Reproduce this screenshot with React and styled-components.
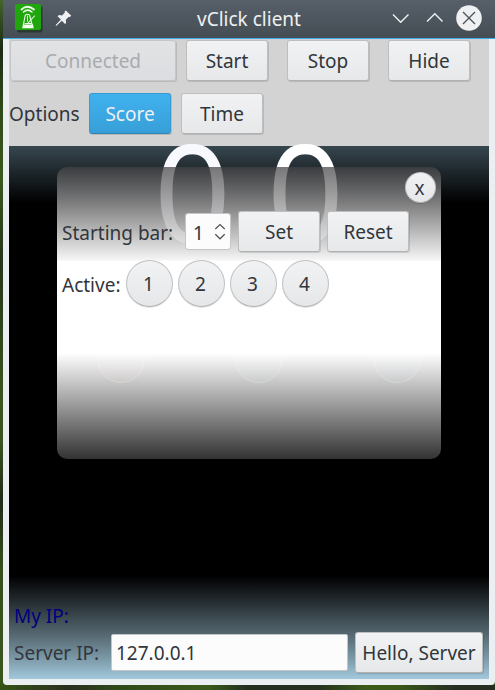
import React from "react";
import styled, { createGlobalStyle } from "styled-components";

const GlobalStyle = createGlobalStyle`
  *, *::before, *::after { box-sizing: border-box; }
  html, body { margin: 0; padding: 0; }
  body { overflow: hidden; }
`;

const Desktop = styled.div`
  width: 495px;
  height: 690px;
  padding-left: 3px;
  overflow: hidden;
  font-family: "Noto Sans", sans-serif;
  font-size: 19px;
  line-height: 26px;
  color: #31363b;
  background:
    linear-gradient(90deg, #375317 0, #2a2f20 14%, #2f4a1a 24%, #3a5a1b 42%, #23301f 50%, #25301f 64%, #3b5c19 74%, #3a5a18 80%, #262e22 92%) 0 685px / 100% 5px no-repeat,
    linear-gradient(#45652b 0, #324c20 20px, #1c2a16 50px, #263a18 75px, #304a18 110px, #3a5a1c 180px, #26351c 260px, #3a571e 400px, #3a5520 440px, #202c1a 500px, #35501c 570px, #3a561d 690px);
`;

const Window = styled.div`
  display: flex;
  flex-direction: column;
  width: 492px;
  height: 685px;
  border-radius: 0 0 4px 4px;
  overflow: hidden;
  background: #eceff2;
`;

const TitleBar = styled.header`
  display: grid;
  grid-template-columns: 164px 1fr 164px;
  align-items: center;
  height: 39px;
  flex: none;
  color: #eff0f1;
  background: linear-gradient(#566068, #454d54);
  border-bottom: 1px solid #3daee9;
`;

const TitleGroup = styled.div`
  display: flex;
  align-items: center;
  height: 38px;
  padding-left: 11px;
  ${(p) => p.$end && "justify-content: flex-end; padding: 0 21px 0 0;"}
`;

const Title = styled.div`
  text-align: center;
  white-space: nowrap;
  padding-bottom: 1px;
`;

const Client = styled.main`
  display: flex;
  flex-direction: column;
  width: 480px;
  height: 640px;
  margin-left: 6px;
`;

const Toolbar = styled.div`
  flex: none;
  height: 107px;
  padding-top: 1px;
  background: #d3d3d3;
`;

const ToolRow = styled.div`
  display: flex;
  align-items: center;
  height: 41px;
  padding-left: ${(p) => p.$inset || 0}px;
  gap: ${(p) => p.$gap}px;
  margin-bottom: 12px;
`;

const OptionLabel = styled.span`
  width: 70px;
  white-space: nowrap;
`;

const Button = styled.button`
  flex: none;
  width: ${(p) => p.$width || 82}px;
  height: 41px;
  padding: 1px 0 0;
  margin-right: ${(p) => p.$after || 0}px;
  font: inherit;
  white-space: nowrap;
  color: #31363b;
  border: 1px solid #bcbec0;
  border-bottom-color: #b0b2b3;
  border-radius: 3px;
  background: linear-gradient(#f1f2f3, #e7e8ea);
  box-shadow: 1px 1px 0 rgba(0, 0, 0, 0.12);
  ${(p) => p.$muted && `
    color: #a9abad;
    background: linear-gradient(#e2e3e5, #dcdde0);
    border-color: #c5c6c7;
  `}
  ${(p) => p.$active && `
    color: #eff0f1;
    background: linear-gradient(#40b1ee, #389fd8);
    border-color: #359bd2;
    border-bottom-color: #2d84b2;
  `}
`;

const Stage = styled.section`
  position: relative;
  display: flex;
  flex-direction: column;
  justify-content: flex-end;
  height: 533px;
  background:
    linear-gradient(#37474f, #000) 0 0 / 100% 57px no-repeat,
    linear-gradient(#000 0, #2c363b 30%, #54666f 56%, #7894a2 78%, #a2c8dc 100%) 0 430px / 100% 103px no-repeat,
    #000;
`;

const Counter = styled.div`
  position: absolute;
  top: -55px;
  left: 0;
  width: 480px;
  text-align: center;
  font-size: 134.5px;
  line-height: 200px;
  word-spacing: 1px;
  white-space: pre;
  color: #fff;
`;

const BarDigit = styled.span`
  color: #f8f8ff;
`;

const BeatLights = styled.div`
  position: absolute;
  top: 189px;
  left: 88px;
  display: flex;
  gap: 90px;
`;

const Light = styled.div`
  width: 48px;
  height: 48px;
  border-radius: 50%;
  border: 1px solid #c9c19a;
  background: ${(p) => p.$tint};
`;

const ScorePanel = styled.div`
  position: absolute;
  top: 21px;
  left: 48px;
  width: 384px;
  height: 292px;
  padding: 44px 0 0 5px;
  border-radius: 10px;
  background: linear-gradient(
    rgba(67, 67, 69, 0.72) 0,
    rgba(248, 248, 248, 0.99) 93px,
    #fff 94px,
    #fff 186px,
    rgba(70, 70, 72, 0.72) 292px
  );
`;

const PanelRow = styled.div`
  display: flex;
  align-items: center;
  height: ${(p) => p.$height}px;
  margin-bottom: 8px;
`;

const FieldLabel = styled.span`
  flex: none;
  width: ${(p) => p.$width}px;
  padding-top: ${(p) => p.$drop || 1}px;
  white-space: nowrap;
`;

const SpinBox = styled.div`
  display: flex;
  align-items: center;
  justify-content: space-between;
  width: 46px;
  height: 37px;
  margin-right: 7px;
  padding: 1px 4px 0 7px;
  border: 1px solid #c4c5c6;
  border-radius: 3px;
  background: #fcfcfc;
`;

const SpinValue = styled.span`
  padding-top: 2px;
`;

const RoundButton = styled.button`
  flex: none;
  width: ${(p) => p.$size}px;
  height: ${(p) => p.$size}px;
  padding: 1px 2px 0 0;
  margin-right: 5px;
  font: inherit;
  color: #31363b;
  border: 1px solid #bfc1c2;
  border-bottom-color: #aeb0b1;
  border-radius: 50%;
  background: linear-gradient(#f1f2f3, #e6e7e9);
  box-shadow: 0 1px 0 rgba(0, 0, 0, 0.1);
`;

const CloseSlot = styled.div`
  position: absolute;
  top: 5px;
  right: 0;
`;

const MyIp = styled.div`
  padding-left: 5px;
  margin-bottom: 3px;
  color: #000080;
`;

const ServerRow = styled.div`
  display: flex;
  align-items: center;
  height: 41px;
  padding-left: 5px;
  margin-bottom: 6px;
`;

const AddressInput = styled.input`
  width: 237px;
  height: 37px;
  margin-right: 7px;
  padding: 0 4px;
  font: inherit;
  color: inherit;
  border: 1px solid #c4c5c6;
  border-radius: 2px;
  outline: 0;
  background: #fcfcfc;
`;

const AppIcon = () => (
  <svg width="30" height="30" viewBox="0 0 30 30">
    <rect x="3" y="2" width="25.5" height="26.5" rx="2" fill="#25362a" opacity=".85" />
    <rect x="1" y="0" width="26" height="26" rx="2" fill="#20a50d" />
    <g fill="none" stroke="#e9ffe5" strokeLinecap="round">
      <path d="M7.5 5.5Q13.5 0 20 5.5" strokeWidth="1.7" />
      <path d="M9.5 8Q13.7 4.3 18 8" strokeWidth="1.5" />
      <path d="M11.3 11L9.3 21M15.5 11l2.7 10M11.5 11q2-1.5 4 0M11 19.5h6.5M14 19L20.5 12M13.5 12v5" strokeWidth="1.1" />
    </g>
    <path d="M9 20.5h10l.8 3.7H8.2z" fill="#f3fff0" />
  </svg>
);

const PinIcon = () => (
  <svg width="18" height="18" viewBox="0 0 18 18">
    <path d="M10.8 1.4 16.3 6.7 14.8 8l-1-.3-3 3.1.3 3.1-1.1 1.2-3.2-3.3-5 4.8-1.2.5.4-1.3 4.9-5.2L2.5 7.3 4 6.1l3.1.3 2.8-3-.3-1z" fill="#eff0f1" />
  </svg>
);

const PinHolder = styled.div`
  display: flex;
  margin: 0 0 2px 11px;
`;

const WindowControls = () => (
  <svg width="88" height="38" viewBox="0 0 88 38" fill="none">
    <path d="M7 14.5l7.7 7.8 7.8-7.8M41 21.5l7.8-7.8 7.7 7.8" stroke="#eff0f1" strokeWidth="1.4" />
    <circle cx="83" cy="18" r="12.8" fill="#eff0f1" />
    <path d="M77 12l12 12M89 12L77 24" stroke="#4c555c" strokeWidth="1.4" />
  </svg>
);

const ControlsHolder = styled.div`
  display: flex;
  svg { overflow: visible; }
`;

const SpinArrows = () => (
  <svg width="12" height="18" viewBox="0 0 12 18" fill="none">
    <path d="M1.3 6L6 1.5 10.7 6M1.3 11.3L6 15.8l4.7-4.5" stroke="#4d5257" strokeWidth="1.2" />
  </svg>
);

const instruments = [1, 2, 3, 4];
const lightTints = ["#4a1e1e", "#1c2c28", "#182838"];

export default function App() {
  return (
    <>
      <GlobalStyle />
      <Desktop>
        <Window>
          <TitleBar>
            <TitleGroup>
              <AppIcon />
              <PinHolder><PinIcon /></PinHolder>
            </TitleGroup>
            <Title>vClick client</Title>
            <TitleGroup $end>
              <ControlsHolder><WindowControls /></ControlsHolder>
            </TitleGroup>
          </TitleBar>
          <Client>
            <Toolbar>
              <ToolRow $gap={19} $inset={1}>
                <Button $width={166} $muted $after={-9}>Connected</Button>
                <Button>Start</Button>
                <Button>Stop</Button>
                <Button>Hide</Button>
              </ToolRow>
              <ToolRow $gap={10}>
                <OptionLabel>Options</OptionLabel>
                <Button $active>Score</Button>
                <Button>Time</Button>
              </ToolRow>
            </Toolbar>
            <Stage>
              <Counter><BarDigit>0</BarDigit> 0</Counter>
              <BeatLights>
                {lightTints.map((tint) => <Light key={tint} $tint={tint} />)}
              </BeatLights>
              <ScorePanel>
                <CloseSlot><RoundButton $size={31}>x</RoundButton></CloseSlot>
                <PanelRow $height={41}>
                  <FieldLabel $width={123} $drop={3}>Starting bar:</FieldLabel>
                  <SpinBox><SpinValue>1</SpinValue><SpinArrows /></SpinBox>
                  <Button $after={7}>Set</Button>
                  <Button>Reset</Button>
                </PanelRow>
                <PanelRow $height={47}>
                  <FieldLabel $width={64} $drop={3}>Active:</FieldLabel>
                  {instruments.map((n) => <RoundButton key={n} $size={47}>{n}</RoundButton>)}
                </PanelRow>
              </ScorePanel>
              <MyIp>My IP:</MyIp>
              <ServerRow>
                <FieldLabel $width={97}>Server IP:</FieldLabel>
                <AddressInput defaultValue="127.0.0.1" aria-label="Server IP" />
                <Button $width={128}>Hello, Server</Button>
              </ServerRow>
            </Stage>
          </Client>
        </Window>
      </Desktop>
    </>
  );
}
